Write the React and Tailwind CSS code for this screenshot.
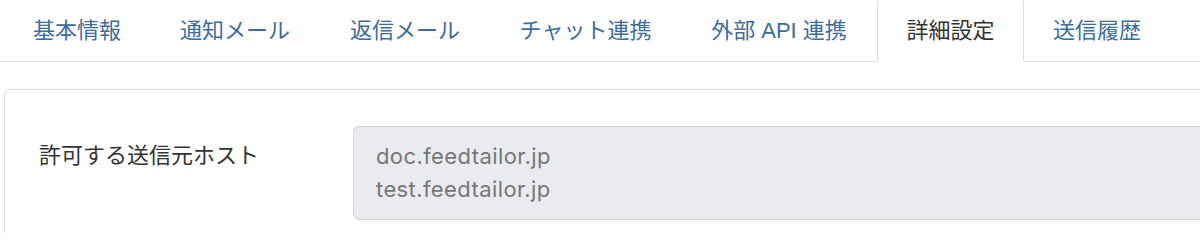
export default function App() {
  const tabs = [
    { t: "基本情報", w: "w-[146px]" },
    { t: "通知メール", w: "w-[170px]" },
    { t: "返信メール", w: "w-[170px]" },
    { t: "チャット連携", w: "w-[191px]" },
    { t: "外部 API 連携", w: "w-[196px]" },
    { t: "詳細設定", w: "w-[147px]", active: true },
    { t: "送信履歴", w: "w-[146px]" },
  ];
  return (
    <div
      className="w-[1200px] h-[233px] overflow-hidden bg-white"
      style={{ fontFamily: '"Liberation Sans", "Noto Sans CJK JP", sans-serif' }}
    >
      <nav className="flex border-b border-[#dddddd] pl-[4px]">
        {tabs.map(({ t, w, active }) =>
          active ? (
            <div
              key={t}
              className={`-mb-px flex h-[62px] shrink-0 items-center justify-center whitespace-nowrap border border-[#dddddd] border-t-transparent border-b-white bg-white pb-[2px] text-[22px] text-[#333333] ${w}`}
            >
              {t}
            </div>
          ) : (
            <div
              key={t}
              className={`-mb-px flex h-[62px] shrink-0 items-center justify-center whitespace-nowrap border border-transparent pb-[2px] text-[22px] text-[#3e6c9d] ${w}`}
            >
              {t}
            </div>
          )
        )}
      </nav>
      <div className="ml-[4px] mt-[27px] w-[1260px] rounded-[6px] border border-[#dddddd] pl-[34px] pt-[36px] pb-[40px]">
        <div className="flex">
          <div className="w-[314px] pt-[13px] text-[22px] leading-[33px] text-[#333333]">許可する送信元ホスト</div>
          <div
            className="w-[900px] rounded-[6px] border border-[#d0d4d8] bg-[#e9ebee] py-[13px] pl-[22px] text-[22px] leading-[33px] tracking-[0.4px] text-[#777777]"
            style={{ fontFamily: 'Inter, "Liberation Sans", sans-serif' }}
          >
            <div>doc.feedtailor.jp</div>
            <div>test.feedtailor.jp</div>
          </div>
        </div>
      </div>
    </div>
  );
}
